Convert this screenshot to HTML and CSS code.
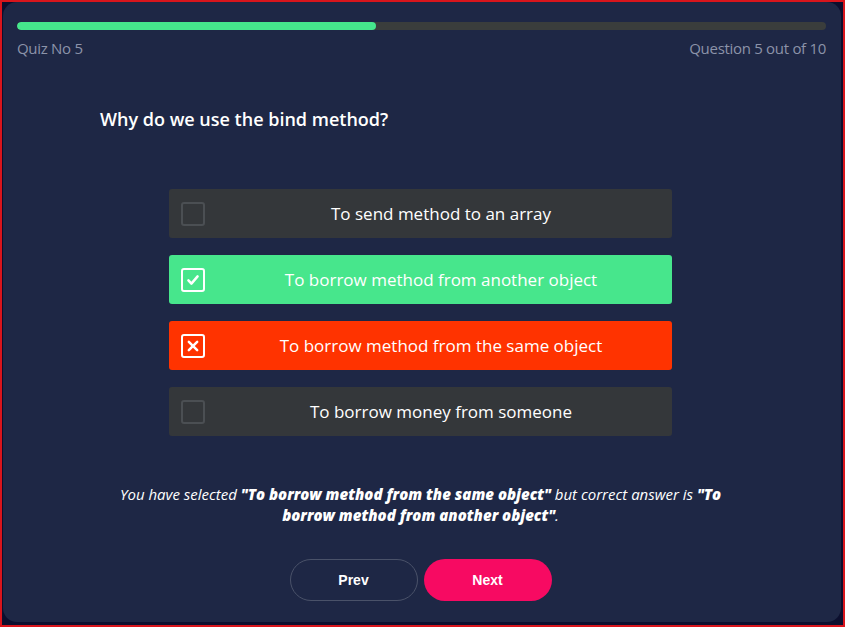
FILE: index.html
```html
<!DOCTYPE html>
<html>
<head>
<meta charset="utf-8">
<link rel="stylesheet" href="styles.css">
</head>
<body>
<div class="frame">
  <div class="card">
    <div class="progress"><div class="progress-fill" style="width:44.4%"></div></div>
    <div class="meta">
      <span>Quiz No 5</span>
      <span>Question 5 out of 10</span>
    </div>
    <div class="content">
      <h1 class="question">Why do we use the bind method?</h1>
      <div class="options">
        <div class="option">
          <span class="box"></span>
          <span class="label">To send method to an array</span>
        </div>
        <div class="option correct">
          <span class="box"><svg viewBox="0 0 24 24" width="24" height="24"><path d="M6.5 12.5l3.6 3.8 7.4-8.6" fill="none" stroke="#fff" stroke-width="3" stroke-linecap="round" stroke-linejoin="round"/></svg></span>
          <span class="label">To borrow method from another object</span>
        </div>
        <div class="option wrong">
          <span class="box"><svg viewBox="0 0 24 24" width="24" height="24"><path d="M7 7l10 10M17 7l-10 10" fill="none" stroke="#fff" stroke-width="3" stroke-linecap="round"/></svg></span>
          <span class="label">To borrow method from the same object</span>
        </div>
        <div class="option">
          <span class="box"></span>
          <span class="label">To borrow money from someone</span>
        </div>
      </div>
      <p class="feedback">You have selected <b>"To borrow method from the same object"</b> but correct answer is <b>"To borrow method from another object"</b>.</p>
      <div class="actions">
        <button class="btn prev">Prev</button>
        <button class="btn next">Next</button>
      </div>
    </div>
  </div>
</div>
</body>
</html>
```
FILE: styles.css
```css
* { box-sizing: border-box; }
html, body { margin: 0; padding: 0; }
body {
  width: 845px;
  height: 627px;
  overflow: hidden;
  font-family: "Open Sans", "Noto Sans", sans-serif;
}
.frame {
  width: 845px;
  height: 627px;
  border: 2px solid #d8151c;
  background: #0c0f2e;
  padding: 0 2px 3px 1px;
}
.card {
  height: 100%;
  background: #1e2745;
  border-radius: 14px;
  padding: 20px 15px 0 14px;
  display: flex;
  flex-direction: column;
}
.progress {
  height: 8px;
  border-radius: 4px;
  background: #3a3d3c;
  overflow: hidden;
}
.progress-fill {
  height: 100%;
  background: #45e68c;
  border-radius: 4px;
}
.meta {
  display: flex;
  justify-content: space-between;
  margin-top: 8px;
  font-size: 15px;
  line-height: 20px;
  color: #8c93a9;
  letter-spacing: -0.3px;
}
.content {
  padding: 0 85px 0 83px;
  display: flex;
  flex-direction: column;
  align-items: center;
}
.question {
  align-self: flex-start;
  margin: 50px 0 0 0;
  font-size: 18px;
  line-height: 22px;
  font-weight: 600;
  color: #ffffff;
}
.options {
  margin-top: 59px;
  width: 503px;
  display: flex;
  flex-direction: column;
  gap: 17px;
}
.option {
  height: 49px;
  background: #34373a;
  border-radius: 3px;
  display: flex;
  align-items: center;
  padding: 0 0 0 12px;
  color: #ffffff;
  font-size: 17px;
}
.option.correct { background: #47e68c; }
.option.wrong { background: #ff3300; }
.box {
  width: 24px;
  height: 24px;
  flex: none;
  border: 2px solid #4b4f53;
  border-radius: 3px;
  display: flex;
  align-items: center;
  justify-content: center;
}
.box svg { width: 22px; height: 22px; }
.option.correct .box, .option.wrong .box { border-color: #ffffff; }
.label {
  flex: 1;
  text-align: center;
  padding-left: 5px;
}
.feedback {
  margin: 48px 0 0 0;
  width: 622px;
  text-align: center;
  font-size: 15px;
  line-height: 21px;
  font-style: italic;
  color: #ffffff;
}
.feedback b { font-weight: 800; }
.actions {
  margin-top: 33px;
  display: flex;
  gap: 6px;
}
.btn {
  width: 128px;
  height: 42px;
  border-radius: 21px;
  font-family: "Liberation Sans", Arial, sans-serif;
  font-size: 14px;
  font-weight: 700;
  color: #ffffff;
  cursor: pointer;
}
.btn.prev {
  background: transparent;
  border: 1px solid #4a5269;
}
.btn.next {
  background: #f70a62;
  border: none;
}
```
